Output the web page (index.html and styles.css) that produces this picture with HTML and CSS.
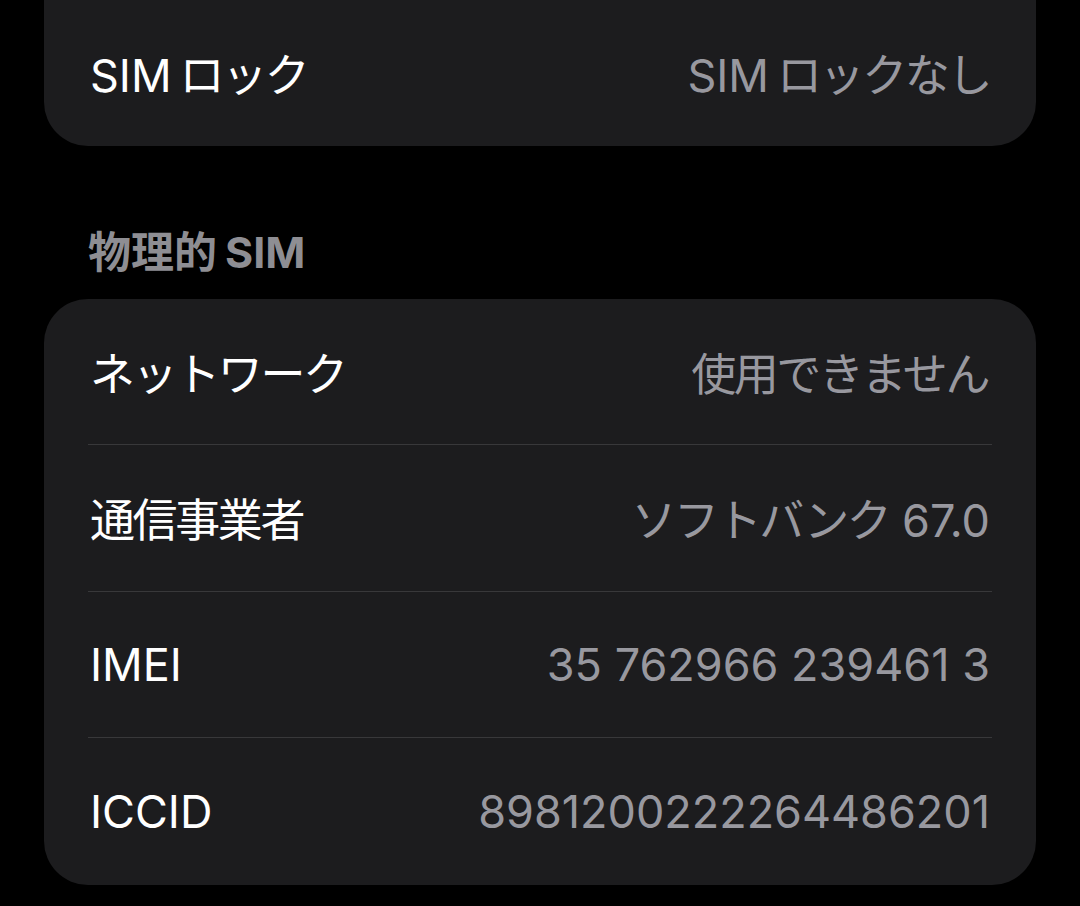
FILE: index.html
```html
<!DOCTYPE html>
<html lang="ja">
<head>
<meta charset="utf-8">
<link rel="stylesheet" href="styles.css">
</head>
<body>
<div class="page">
  <div class="card card-top">
    <div class="row last"><span class="label">SIM<span class="ja gap">ロック</span></span><span class="value">SIM<span class="ja gap">ロックなし</span></span></div>
  </div>
  <div class="section-title"><span class="ja-h">物理的</span><span class="gap-h">SIM</span></div>
  <div class="card">
    <div class="row"><span class="label ja">ネットワーク</span><span class="value ja">使用できません</span></div>
    <div class="row"><span class="label ja">通信事業者</span><span class="value"><span class="ja">ソフトバンク</span> 67.0</span></div>
    <div class="row"><span class="label">IMEI</span><span class="value">35 762966 239461 3</span></div>
    <div class="row last"><span class="label">ICCID</span><span class="value">8981200222264486201</span></div>
  </div>
</div>
</body>
</html>
```
FILE: styles.css
```css
html, body {
  margin: 0;
  padding: 0;
  background: #000;
}
body {
  width: 1080px;
  height: 906px;
  overflow: hidden;
  font-family: Inter, "Noto Sans CJK JP", sans-serif;
  -webkit-font-smoothing: antialiased;
}
.page {
  display: flex;
  flex-direction: column;
}
.card {
  margin: 0 44px;
  background: #1c1c1e;
  border-radius: 44px;
  padding: 0 44px;
}
.card-top {
  border-radius: 0 0 44px 44px;
  margin-top: -1px;
}
.row {
  box-sizing: border-box;
  height: 146.5px;
  display: flex;
  align-items: center;
  justify-content: space-between;
  border-bottom: 1.5px solid #38383a;
  font-size: 45px;
  padding: 0 2px;
}
.row.last {
  border-bottom: none;
}
.label {
  color: #fff;
}
.value {
  color: #98989f;
}
.ja {
  letter-spacing: -2.4px;
}
.value.ja {
  margin-right: 2px;
}
.gap {
  margin-left: 8px;
}
.section-title {
  padding: 81px 0 0 88px;
  margin-bottom: 22px;
  line-height: 50px;
  font-size: 43px;
  font-weight: 700;
  color: #8e8e93;
}
.gap-h {
  margin-left: 8px;
}
```
